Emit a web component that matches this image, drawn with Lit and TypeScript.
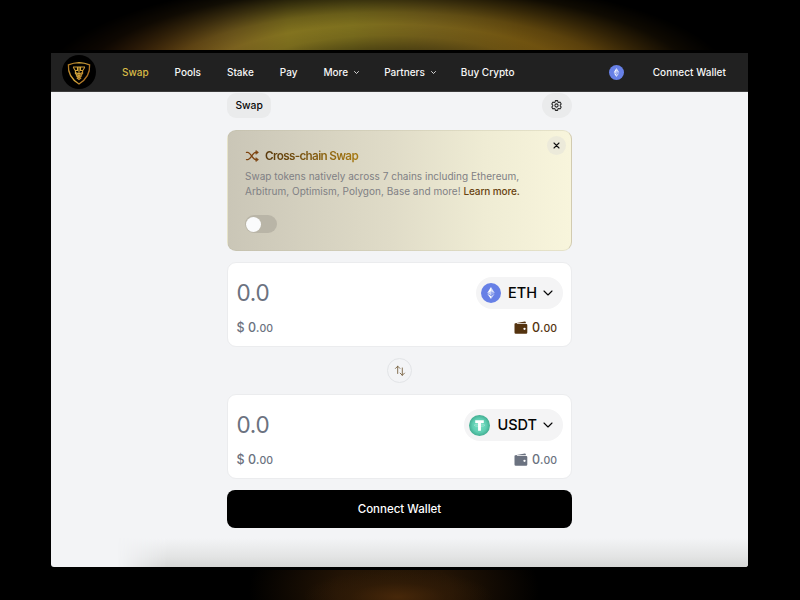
import { LitElement, html, css } from "lit";
import { customElement, property } from "lit/decorators.js";

const chevron = (w: number, sw: number) => html`<svg width=${w} height=${w} viewBox="0 0 10 10" fill="none" stroke="currentColor" stroke-width=${sw} stroke-linecap="round" stroke-linejoin="round"><path d="M1 3l4 4 4-4" /></svg>`;

const ethIcon = (size: number) => html`<svg width=${size} height=${size} viewBox="0 0 32 32">
  <circle cx="16" cy="16" r="16" fill="#6780e6" />
  <g fill="#fff" transform="translate(2.800 3.200) scale(.8)">
    <path fill-opacity=".75" d="M16.500 4v8.870l7.500 3.350z" /><path d="M16.500 4L9 16.220l7.500-3.350z" />
    <path fill-opacity=".65" d="M16.500 21.970v6.030L24 17.620z" /><path d="M16.500 28v-6.030L9 17.620z" />
    <path fill-opacity=".35" d="M16.500 20.570l7.500-4.350-7.500-3.350z" /><path fill-opacity=".65" d="M9 16.220l7.500 4.350v-7.700z" />
  </g></svg>`;

const usdtIcon = html`<svg width="21" height="21" viewBox="0 0 32 32">
  <defs><radialGradient id="t"><stop offset="0" stop-color="#79dfc4" /><stop offset=".65" stop-color="#5fceb2" /><stop offset="1" stop-color="#42ad91" /></radialGradient></defs>
  <circle cx="16" cy="16" r="16" fill="url(#t)" />
  <path fill="#fff" d="M9.500 8h13v4h-4.300v12h-4.400V12H9.500z" />
  <ellipse cx="16" cy="15.500" rx="8" ry="1.800" fill="none" stroke="#fff" stroke-opacity=".6" stroke-width=".8" />
</svg>`;

const walletIcon = html`<svg width="14" height="14" viewBox="0 0 14 14">
  <path fill="currentColor" d="M1.300 2.200L10.800.5q.9-.1 1 .8l.1 1H3.200q-.5 0-.5.350t.5.350h9q1.100 0 1.100 1.100v7.400q0 1.200-1.200 1.200H1.800Q.5 12.700.5 11.400V3.300q0-.9.800-1.100z" />
  <circle cx="10.500" cy="7.800" r="1.150" fill="#fff" /></svg>`;

const shieldIcon = html`<svg width="34" height="34" viewBox="0 0 34 34" fill="none">
  <defs><linearGradient id="gold" gradientUnits="userSpaceOnUse" x1="6" y1="12" x2="28" y2="22"><stop offset="0" stop-color="#b07a24" /><stop offset=".45" stop-color="#dcae3e" /><stop offset="1" stop-color="#9a5a1a" /></linearGradient></defs>
  <circle cx="17" cy="17" r="17" fill="#000" />
  <path stroke="url(#gold)" stroke-width="1.300" d="M17 7.700q5.500.2 10.600 2.100.9 12.200-10.600 19.200Q5.500 22 6.400 9.800 11.500 7.900 17 7.700z" />
  <path stroke="url(#gold)" stroke-width="1.100" d="M11 12h12M11.200 12.300l2 3.200h2.300v-3M22.800 12.300l-2 3.200h-2.300v-3M17 12v11.500M13.400 15.500v3.300l3.600 2 3.600-2v-3.300M13.500 17.500l3.500 1.500 3.500-1.500M14 20.500l3 2.200 3-2.200M14.800 22.800l2.200 1.800 2.200-1.800" />
</svg>`;

const gearIcon = html`<svg width="13" height="13" viewBox="0 0 24 24" fill="none" stroke="#222" stroke-width="1.900" stroke-linecap="round" stroke-linejoin="round">
  <path d="M9.600 3.940c.09-.54.560-.94 1.110-.94h2.590c.55 0 1.020.4 1.110.94l.21 1.280c.06.37.31.690.650.870.07.040.150.080.220.130.32.190.720.260 1.080.120l1.210-.45c.52-.19 1.090.01 1.370.49l1.300 2.240c.28.480.17 1.080-.26 1.430l-1 .83c-.29.240-.44.620-.43.990v.25c-.1.380.14.750.43.990l1 .83c.43.350.54.960.26 1.430l-1.300 2.250c-.28.480-.85.680-1.370.49l-1.210-.46c-.36-.13-.76-.07-1.080.13l-.22.120c-.34.180-.59.500-.65.870l-.21 1.280c-.09.550-.56.950-1.110.95h-2.600c-.55 0-1.020-.4-1.110-.94l-.21-1.280c-.06-.38-.31-.69-.65-.87l-.22-.13c-.32-.2-.72-.26-1.080-.13l-1.210.46c-.52.190-1.090-.01-1.370-.49l-1.300-2.240c-.28-.48-.17-1.080.26-1.430l1-.83c.29-.24.440-.61.430-.99v-.25c.01-.38-.14-.75-.43-.99l-1-.83c-.43-.35-.54-.95-.26-1.430l1.300-2.250c.28-.47.850-.68 1.370-.49l1.210.46c.36.130.76.070 1.080-.13l.22-.12c.34-.18.590-.5.650-.87z" />
  <circle cx="12" cy="12" r="3" /></svg>`;

@customElement("token-panel")
export class TokenPanel extends LitElement {
  @property() symbol = "ETH";
  @property({ type: Boolean }) muted = false;

  static styles = css`
    :host { display: flex; flex-direction: column; box-sizing: border-box; height: 85px; padding: 14px 8.5px 0; border: 1px solid #ebecee; border-radius: 9px; background: #fff; color: #6b7280; }
    svg { display: block; flex: none; }
    .row { display: flex; align-items: center; justify-content: space-between; }
    .top { height: 32px; }
    .amount { font-size: 22.5px; line-height: 32px; letter-spacing: -.3px; }
    .picker { display: flex; align-items: center; height: 32px; box-sizing: border-box; padding: 0 9.5px 0 5px; border-radius: 16px; background: #f4f4f5; color: #050505; }
    .symbol { font-size: 14.5px; font-weight: 500; margin: 0 6px 0 7px; line-height: 20px; }
    .bottom { height: 20px; margin-top: 9px; font-size: 12.5px; font-weight: 500; line-height: 20px; }
    .small { font-size: 10.5px; }
    .balance { display: flex; align-items: center; gap: 4px; margin-right: 5.5px; color: #54330f; }
    .balance svg { margin-top: -1px; }
    .muted { color: #6b7280; }
  `;

  render() {
    return html`
      <div class="row top">
        <span class="amount">0.0</span>
        <div class="picker">${this.symbol === "ETH" ? ethIcon(20) : usdtIcon}<span class="symbol">${this.symbol}</span>${chevron(10, 1.1)}</div>
      </div>
      <div class="row bottom">
        <span>$ 0.<span class="small">00</span></span>
        <span class="balance ${this.muted ? "muted" : ""}">${walletIcon}<span>0.<span class="small">00</span></span></span>
      </div>`;
  }
}

@customElement("app-root")
export class AppRoot extends LitElement {
  static styles = css`
    :host { display: flex; flex-direction: column; align-items: center; position: relative; box-sizing: border-box; width: 800px; height: 600px; padding-top: 50px; overflow: hidden; font-family: Inter, "Liberation Sans", sans-serif;
      background:
        radial-gradient(ellipse 95px 28px at 398px 597px, rgba(76, 42, 10, .85), rgba(60, 33, 8, .4) 50%, rgba(40, 22, 6, 0)),
        radial-gradient(ellipse 145px 80px at 394px 590px, #291806 0%, #231405 40%, #000 100%),
        #000; }
    svg { display: block; flex: none; }
    .glow { position: absolute; inset: 0 0 auto 0; height: 50px;
      background: linear-gradient(90deg, #5e300e 12%, #6c4612 20%, #7e6420 29%, #877720 36%, #82741f 44%, #7a641c 54%, #745611 65%, #6b480c 82%, #5c3c0a 90%);
      -webkit-mask-image: radial-gradient(ellipse 348px 110px at 388px 86px, rgba(0,0,0,.35) 0, rgba(0,0,0,.6) 32%, rgba(0,0,0,.9) 46%, rgba(0,0,0,.97) 56%, rgba(0,0,0,.8) 67%, rgba(0,0,0,.46) 78%, rgba(0,0,0,.14) 89%, transparent 100%);
      mask-image: radial-gradient(ellipse 348px 110px at 388px 86px, rgba(0,0,0,.35) 0, rgba(0,0,0,.6) 32%, rgba(0,0,0,.9) 46%, rgba(0,0,0,.97) 56%, rgba(0,0,0,.8) 67%, rgba(0,0,0,.46) 78%, rgba(0,0,0,.14) 89%, transparent 100%); }
    .frame { width: 699px; height: 520px; box-sizing: border-box; padding: 3px 1px; background: #000; margin-left: -1px; }
    .window { display: flex; flex-direction: column; width: 697px; height: 514px; border-radius: 0 0 3px 3px; overflow: hidden; background: #f3f4f6; }
    .header { display: flex; align-items: center; box-sizing: border-box; height: 39px; flex: none; padding-left: 11px; background: #212121; border-bottom: 1px solid #3c3c3c; color: #f6f6f6; font-size: 10px; font-weight: 500; line-height: 14px; }
    .nav { display: flex; align-items: center; gap: 26px; margin-left: 26px; }
    .item { display: flex; align-items: center; gap: 6px; white-space: nowrap; }
    .menu { margin-right: -1px; }
    .active { color: #d8bb46; }
    .network { margin-left: auto; }
    .wallet { margin: 0 22px 0 28.5px; letter-spacing: .05px; }
    .body { flex: 1; display: flex; flex-direction: column; align-items: center; position: relative; }
    .main { width: 345px; display: flex; flex-direction: column; position: relative; z-index: 1; }
    .bar { display: flex; justify-content: space-between; margin-top: 1px; }
    .tab { height: 25px; box-sizing: border-box; padding: 0 8.5px; border-radius: 9px; background: #eaebec; font-size: 10.3px; line-height: 25px; font-weight: 500; color: #080808; letter-spacing: -.05px; }
    .settings { width: 30px; height: 25px; box-sizing: border-box; padding: 0 1px 1px 0; border-radius: 13px; background: #eaebec; display: grid; place-items: center; }
    .promo { position: relative; box-sizing: border-box; height: 121px; margin-top: 12px; padding: 17px 18px 0 17px; border: 1px solid rgba(190, 185, 160, .3); border-right-color: #d2cbb0; border-radius: 9px; background: linear-gradient(90deg, #cac6b7, #e0dcc8 48%, #efecd4 75%, #f8f5dc); }
    .title { display: flex; align-items: center; gap: 6px; height: 17px; font-size: 11.7px; letter-spacing: -0.66px; font-weight: 600; }
    .title svg { margin-top: -1px; }
    .gradient { background: linear-gradient(90deg, #58380b, #a87a12); -webkit-background-clip: text; background-clip: text; color: transparent; line-height: 17px; padding-right: 1px; }
    .copy { margin: 4px 0 0; font-size: 10px; line-height: 14.5px; letter-spacing: .02px; color: #808084; white-space: nowrap; }
    .learn { color: #684310; font-weight: 500; letter-spacing: -.1px; }
    .toggle { box-sizing: border-box; width: 32px; height: 18px; margin-top: 17px; padding: 1.5px 1px; border-radius: 9px; background: #b9b5a7; }
    .knob { width: 15px; height: 15px; border-radius: 50%; background: #fafbfc; }
    .close { position: absolute; top: 5px; right: 5px; width: 19px; height: 19px; border-radius: 50%; display: grid; place-items: center; background: #eceada; }
    .source { margin-top: 11px; }
    .flip { box-sizing: border-box; width: 25px; height: 25px; margin: 11px auto; border: 1px solid #e2e4e7; border-radius: 50%; display: grid; place-items: center; }
    .connect { height: 38px; margin-top: 11px; border-radius: 8px; background: #000; color: #fff; text-align: center; font-size: 11.5px; line-height: 38px; font-weight: 500; }
    .shade { position: absolute; left: 66px; right: 0; bottom: 0; height: 29px; background: linear-gradient(to top, #d6d7d6, #e3e4e4 35%, #f3f4f6); -webkit-mask-image: linear-gradient(90deg, transparent, #000 50px); mask-image: linear-gradient(90deg, transparent, #000 50px); }
  `;

  render() {
    return html`
      <div class="glow"></div>
      <div class="frame"><div class="window">
        <div class="header">
          ${shieldIcon}
          <div class="nav">
            <span class="item active">Swap</span><span class="item">Pools</span><span class="item">Stake</span><span class="item">Pay</span>
            <span class="item menu">More ${chevron(5, 1.7)}</span><span class="item menu">Partners ${chevron(5, 1.7)}</span><span class="item">Buy Crypto</span>
          </div>
          <span class="network">${ethIcon(15)}</span>
          <span class="wallet">Connect Wallet</span>
        </div>
        <div class="body">
          <div class="main">
            <div class="bar"><span class="tab">Swap</span><span class="settings">${gearIcon}</span></div>
            <div class="promo">
              <div class="title">
                <svg width="14" height="12" viewBox="0 0 14 12" fill="none" stroke="#7d430f" stroke-width="1.400" stroke-linecap="round" stroke-linejoin="round"><path d="M1.500 2.400h1.200c2.800 0 5 7.200 8 7.200h.8M1.500 9.600h1.200c2.800 0 5-7.200 8-7.200h.8" /><path fill="#7d430f" stroke-width=".8" d="M11.200.8l2.200 1.600-2.200 1.600zM11.200 8l2.200 1.600-2.200 1.600z" /></svg>
                <span class="gradient">Cross-chain Swap</span>
              </div>
              <p class="copy">Swap tokens natively across 7 chains including Ethereum,<br />Arbitrum, Optimism, Polygon, Base and more! <span class="learn">Learn more.</span></p>
              <div class="toggle"><div class="knob"></div></div>
              <span class="close"><svg width="7" height="7" viewBox="0 0 7 7" stroke="#111" stroke-width="1.100" stroke-linecap="round"><path d="M1 1l5 5M6 1L1 6" /></svg></span>
            </div>
            <token-panel class="source" symbol="ETH"></token-panel>
            <div class="flip"><svg width="12" height="12" viewBox="0 0 12 12" fill="none" stroke="#77613f" stroke-width=".9" stroke-linecap="round" stroke-linejoin="round"><path d="M3.700 8.500V1.200M1.500 3.400l2.200-2.200 2.200 2.200M8.300 3v7.300M6.100 8.100l2.200 2.200 2.200-2.200" /></svg></div>
            <token-panel symbol="USDT" muted></token-panel>
            <div class="connect">Connect Wallet</div>
          </div>
          <div class="shade"></div>
        </div>
      </div></div>`;
  }
}
